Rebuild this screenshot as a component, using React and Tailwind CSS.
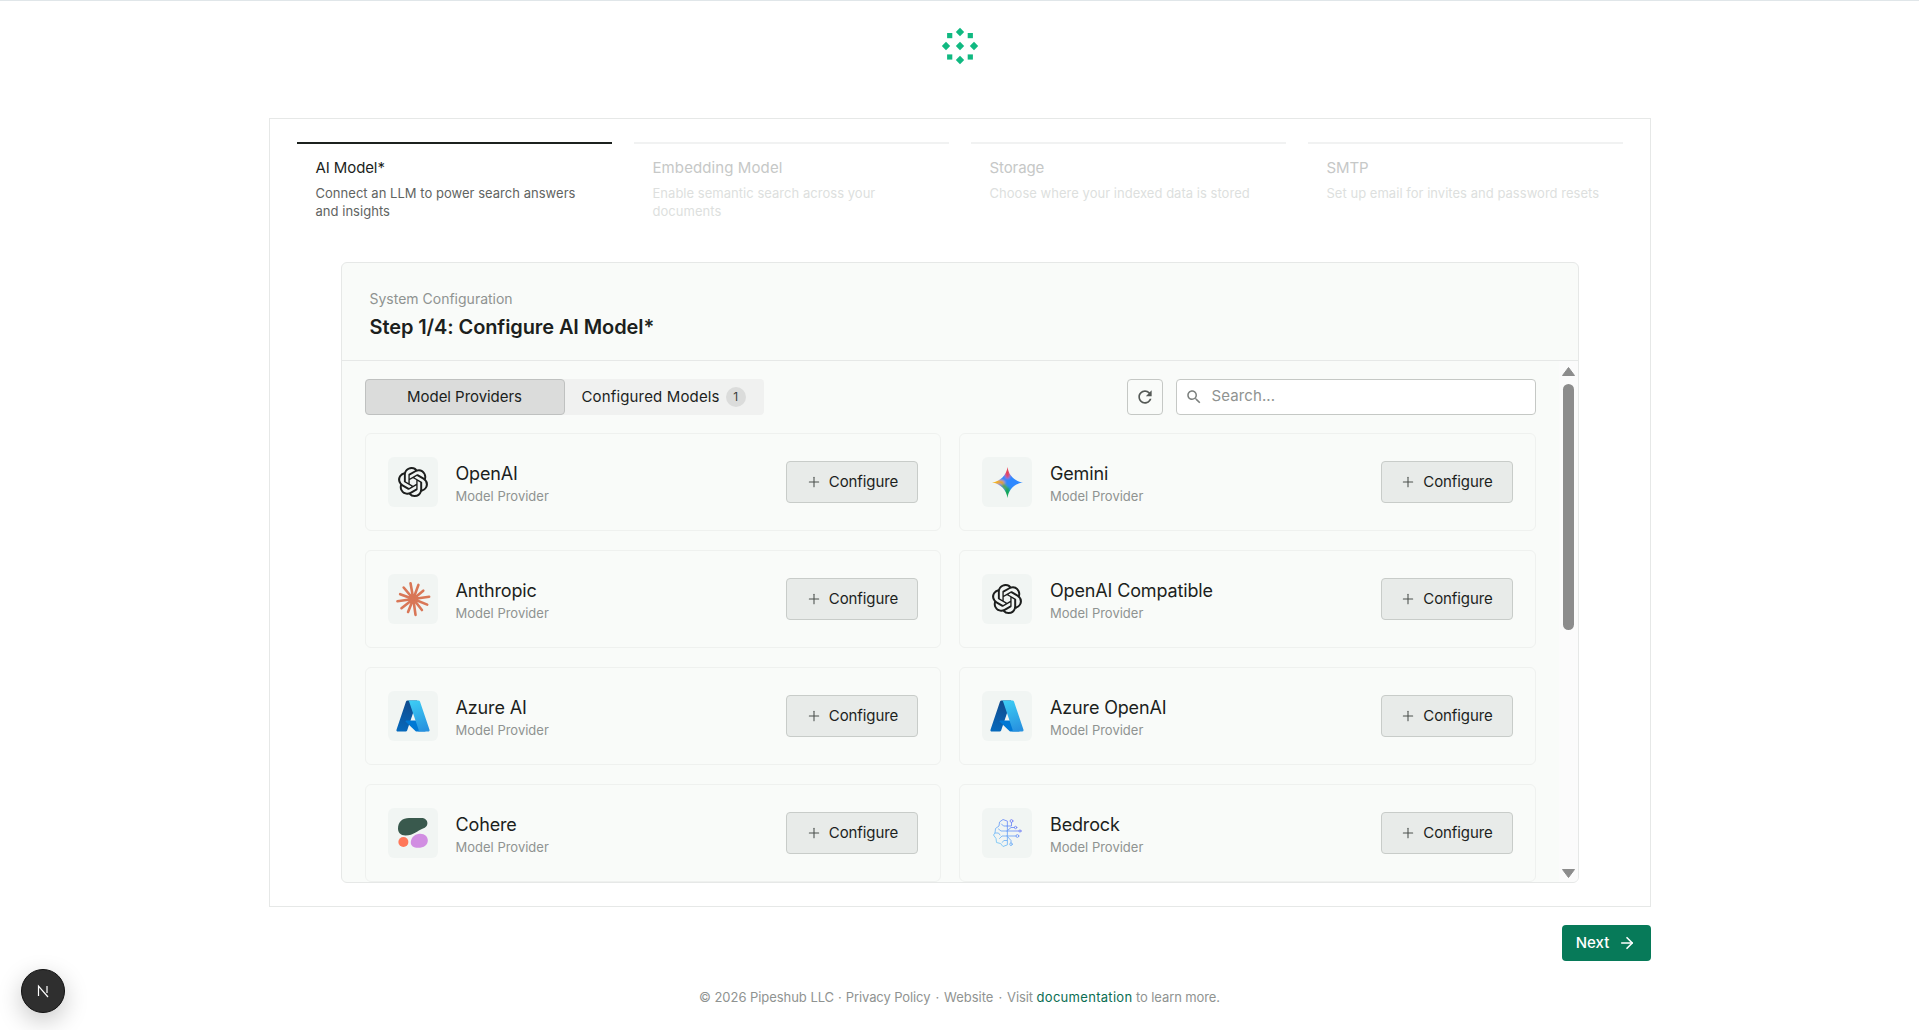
import React from "react";
import { SiOpenai } from "react-icons/si";
import { Plus, ArrowRight } from "lucide-react";

const steps = [
  { title: "AI Model*", desc: "Connect an LLM to power search answers and insights", active: true },
  { title: "Embedding Model", desc: "Enable semantic search across your documents" },
  { title: "Storage", desc: "Choose where your indexed data is stored" },
  { title: "SMTP", desc: "Set up email for invites and password resets" },
];

function Logo() {
  const d = (x, y, k) => <polygon key={k} points={`${x},${y - 4.2} ${x + 4.2},${y} ${x},${y + 4.2} ${x - 4.2},${y}`} fill="#10b981" />;
  const s = (x, y, k) => <rect key={k} x={x - 2.6} y={y - 2.6} width="5.2" height="5.2" fill="#10b981" />;
  return (
    <svg width="40" height="40" viewBox="0 0 40 40">
      {d(20, 20, "c")}{d(6, 20, "l")}{d(34, 20, "r")}{d(20, 6, "t")}{d(20, 34, "b")}
      {s(9.7, 9.6, "a")}{s(30.3, 9.6, "e")}{s(9.7, 31, "f")}{s(30.3, 31, "g")}
    </svg>
  );
}

function Gemini() {
  const star = "M12 0C12.8 6.4 17.6 11.2 24 12C17.6 12.8 12.8 17.6 12 24C11.2 17.6 6.4 12.8 0 12C6.4 11.2 11.2 6.4 12 0Z";
  return (
    <svg width="31" height="31" viewBox="0 0 24 24">
      <defs>
        <clipPath id="gemclip"><path d={star} /></clipPath>
        <filter id="gemblur" x="-30%" y="-30%" width="160%" height="160%"><feGaussianBlur stdDeviation="0.9" /></filter>
      </defs>
      <g clipPath="url(#gemclip)">
        <g filter="url(#gemblur)">
          <rect x="-2" y="-2" width="28" height="28" fill="#2f88ff" />
          <polygon points="11.5,9.5 7,-2 15,-2 13.5,8" fill="#e8455a" />
          <polygon points="10.5,12 -2,7 -2,15" fill="#f4b41e" />
          <polygon points="8,10 10,12 8,14 3,12" fill="#e9a21c" />
          <polygon points="11.5,14.5 6,26 16,26 13.5,16" fill="#12a75c" />
          <polygon points="9,13 11.5,14 11,18 7,15" fill="#5aa83a" />
          <circle cx="14.5" cy="12" r="4" fill="#2f88ff" />
        </g>
      </g>
    </svg>
  );
}

function Anthropic() {
  const rays = [
    [-100, 16], [-70, 15], [-40, 13], [-8, 16], [22, 15], [52, 14], [82, 16],
    [112, 14], [142, 15], [172, 16], [-160, 14], [-130, 15],
  ];
  return (
    <svg width="50" height="50" viewBox="0 0 50 50">
      <circle cx="25.3" cy="25" r="5" fill="#d97757" />
      {rays.map(([a, l], i) => {
        const r = (a * Math.PI) / 180;
        return <line key={i} x1="25.3" y1="25" x2={25.3 + Math.cos(r) * l} y2={25 + Math.sin(r) * l} stroke="#d97757" strokeWidth="2.6" strokeLinecap="round" />;
      })}
    </svg>
  );
}

function Azure() {
  return (
    <svg width="36" height="36" viewBox="0 0 96 96">
      <defs>
        <linearGradient id="az1b" x1="43" y1="8" x2="16" y2="88" gradientUnits="userSpaceOnUse">
          <stop offset="0" stopColor="#114a8b" /><stop offset="1" stopColor="#0669bc" />
        </linearGradient>
        <linearGradient id="az2" x1="48" y1="8" x2="76" y2="86" gradientUnits="userSpaceOnUse">
          <stop offset="0" stopColor="#3ccbf4" /><stop offset="1" stopColor="#2892df" />
        </linearGradient>
      </defs>
      <path d="M33.338 6.544h26.038l-27.03 80.087a4.152 4.152 0 0 1-3.933 2.824H8.149a4.145 4.145 0 0 1-3.928-5.47L29.404 9.368a4.152 4.152 0 0 1 3.934-2.825z" fill="url(#az1b)" />
      <path d="M71.175 60.261h-41.29a1.911 1.911 0 0 0-1.305 3.309l26.532 24.764a4.171 4.171 0 0 0 2.846 1.121h23.38z" fill="#0078d4" />
      <path d="M66.595 9.364a4.145 4.145 0 0 0-3.928-2.82H33.648a4.146 4.146 0 0 1 3.928 2.82l25.184 74.62a4.146 4.146 0 0 1-3.928 5.472h29.02a4.146 4.146 0 0 0 3.927-5.472z" fill="url(#az2)" />
    </svg>
  );
}

function Cohere() {
  return (
    <svg width="50" height="50" viewBox="0 0 50 50">
      <path d="M17.5 27.5C12.5 27.5 10 24.5 10 20.5C10 14 14.5 10 21 10L33 10C37 10 39.4 12 39.4 15.2C39.4 18 37.6 19.6 35 20.6C29 23 26 27.5 17.5 27.5Z" fill="#39594d" />
      <circle cx="15.4" cy="34" r="5" fill="#ff7759" />
      <path d="M31 25.8C36.5 25.2 39.8 28.6 39.8 32.4C39.8 36.6 36 39.8 30 39.8C25.5 39.8 22.8 37.8 22.8 34.5C22.8 30.5 26 26.4 31 25.8Z" fill="#d18ee2" />
    </svg>
  );
}

function Bedrock() {
  return (
    <svg width="30" height="30" viewBox="0 0 30 30" fill="none" strokeWidth="0.9" strokeLinecap="round" strokeLinejoin="round">
      <defs>
        <linearGradient id="bed" x1="2" y1="28" x2="28" y2="2" gradientUnits="userSpaceOnUse">
          <stop offset="0" stopColor="#7dd3f5" /><stop offset="0.6" stopColor="#6f9df7" /><stop offset="1" stopColor="#7b6df6" />
        </linearGradient>
      </defs>
      <g stroke="url(#bed)">
        <path d="M15 3 11 1.5 7.5 4 7 8 3.5 10.5 3 15 1.5 17 4 20.5 4.5 24.5 8.5 25.5 11 28.5 15 27Z" />
        <path d="M15 8H11.5L9.5 6M15 13H9L6.5 11M15 18H10L7.5 20.5M15 22.5H12L10 24.5M3 15H6.5L8 17" />
        <path d="M15 8H19.5V4.5M15 13H27M15 13L19 9.5H22.5M15 18H24M15 18L19 22.5V25" />
        <circle cx="19.5" cy="3" r="1.4" /><circle cx="23.6" cy="9.5" r="1.2" /><circle cx="28" cy="13" r="1.1" />
        <circle cx="25.4" cy="18" r="1.4" /><circle cx="19" cy="26.2" r="1.3" />
      </g>
    </svg>
  );
}

const Openai = () => <SiOpenai size={30} color="#1d1f1e" />;

const providers = [
  ["OpenAI", <Openai />], ["Gemini", <Gemini />],
  ["Anthropic", <Anthropic />], ["OpenAI Compatible", <Openai />],
  ["Azure AI", <Azure />], ["Azure OpenAI", <Azure />],
  ["Cohere", <Cohere />], ["Bedrock", <Bedrock />],
];

function Card({ name, icon }) {
  return (
    <div className="h-[98px] shrink-0 flex items-center pl-[22px] pr-[22px] border border-[#eff1ef] rounded-[6px] bg-[#f9fbf9]">
      <div className="w-[50px] h-[50px] rounded-[6px] bg-[#f1f5f3] flex items-center justify-center shrink-0">{icon}</div>
      <div className="ml-[18px] mt-[3px] flex-1 min-w-0">
        <div className="text-[18px] leading-[22px] text-[#1c1f1d] tracking-[-0.15px]">{name}</div>
        <div className="text-[13px] leading-[18px] mt-[2px] text-[#8f9391]">Model Provider</div>
      </div>
      <button className="w-[132px] h-[42px] flex items-center justify-center gap-[7px] bg-[#e8ebe9] border border-[#c8ccc9] rounded-[4px] text-[15px] tracking-[-0.1px] text-[#1c1f1d]">
        <Plus size={16} strokeWidth={1.6} color="#4b504d" />
        <span>Configure</span>
      </button>
    </div>
  );
}

export default function App() {
  return (
    <div className="min-h-[1030px] bg-white flex flex-col items-center border-t border-[#e0e6e9] font-['Inter','Noto_Sans',sans-serif]">
      <div className="h-[117px] w-full flex justify-center pt-[25px]"><Logo /></div>

      <div className="w-[1382px] h-[789px] border border-[#e6e8e7] bg-white px-[27px] pt-[23px] shrink-0">
        <div className="grid grid-cols-4 gap-x-[22px]">
          {steps.map((s) => (
            <div key={s.title}>
              <div className={s.active ? "h-[2px] bg-[#1c211e]" : "h-[2px] bg-[#f1f2f2]"} />
              <div className="pl-[19px] pr-[18px] pt-[14px] h-[90px]">
                <div className={`text-[15px] leading-[20px] ${s.title === "Embedding Model" ? "tracking-[0.1px]" : "tracking-[-0.1px]"} ${s.active ? "text-[#1c1f1d]" : "text-[#c6c8c7]"}`}>{s.title}</div>
                <div className={`mt-[6px] text-[13px] leading-[18px] tracking-[0.03px] ${s.active ? "text-[#5f6462]" : "text-[#dddfde]"}`}>{s.desc}</div>
              </div>
            </div>
          ))}
        </div>

        <div className="mx-[44px] mt-[28px] h-[621px] border border-[#e6e8e7] rounded-[6px] bg-[#f9fbf9] flex flex-col overflow-hidden">
          <div className="h-[98px] shrink-0 border-b border-[#e6e8e7] pl-[28px] pt-[26px]">
            <div className="text-[14px] leading-[20px] text-[#8f9391]">System Configuration</div>
            <div className="mt-[4px] text-[20px] leading-[28px] font-semibold text-[#1c1f1d] tracking-[-0.1px]">Step 1/4: Configure AI Model*</div>
          </div>

          <div className="flex-1 min-h-0 flex">
            <div className="flex-1 min-w-0 pl-[23px] pr-[23px] pt-[18px] overflow-hidden">
              <div className="flex items-center h-[36px]">
                <div className="flex h-[36px] bg-[#f0f1f0] rounded-[4px]">
                  <div className="w-[200px] flex items-center justify-center bg-[#dbdcdb] border border-[#bfc1c0] rounded-[4px] text-[15px] text-[#1c1f1d] tracking-[-0.05px]">Model Providers</div>
                  <div className="w-[199px] flex items-center pl-[17px] text-[15px] text-[#1c1f1d] tracking-[0.15px]">
                    Configured Models
                    <span className="ml-[6px] w-[20px] h-[20px] rounded-full bg-[#dbdcdb] flex items-center justify-center text-[12px] text-[#3a3d3b]">1</span>
                  </div>
                </div>
                <button className="ml-auto w-[36px] h-[36px] flex items-center justify-center border border-[#c5c8c5] rounded-[4px] bg-[#f9fbf9]">
                  <svg width="20" height="20" viewBox="0 0 24 24" fill="#555a57"><path d="M17.65 6.35C16.2 4.9 14.21 4 12 4c-4.42 0-7.99 3.58-7.99 8s3.57 8 7.99 8c3.73 0 6.84-2.55 7.73-6h-2.08c-.82 2.33-3.04 4-5.65 4-3.31 0-6-2.69-6-6s2.69-6 6-6c1.66 0 3.14.69 4.22 1.78L13 11h7V4l-2.35 2.35z" /></svg>
                </button>
                <div className="ml-[13px] w-[360px] h-[36px] flex items-center bg-white border border-[#c5c8c5] rounded-[4px] pl-[8px]">
                  <svg width="18" height="18" viewBox="0 0 24 24" fill="#7c807e"><path d="M15.5 14h-.79l-.28-.27C15.41 12.59 16 11.11 16 9.5 16 5.91 13.09 3 9.5 3S3 5.91 3 9.5 5.91 16 9.5 16c1.61 0 3.09-.59 4.23-1.57l.27.28v.79l5 4.99L20.49 19l-4.99-5zm-6 0C7.01 14 5 11.99 5 9.5S7.01 5 9.5 5 14 7.01 14 9.5 11.99 14 9.5 14z" /></svg>
                  <span className="ml-[9px] text-[15px] tracking-[0.1px] text-[#8f9391] pb-[1px]">Search...</span>
                </div>
              </div>

              <div className="mt-[18px] grid grid-cols-2 gap-x-[18px] gap-y-[19px]">
                {providers.map(([n, i]) => <Card key={n} name={n} icon={i} />)}
              </div>
            </div>

            <div className="w-[19px] shrink-0 bg-[#fbfbfb] flex flex-col items-center pt-[6px] pb-[4px]">
              <svg width="13" height="9" viewBox="0 0 13 9" fill="#8c8c8c"><path d="M6.5 0.5 12.5 8.5H0.5Z" stroke="#8c8c8c" strokeLinejoin="round" /></svg>
              <div className="mt-[8px] w-[11px] h-[246px] rounded-full bg-[#8c8c8c]" />
              <svg className="mt-auto" width="13" height="9" viewBox="0 0 13 9" fill="#8c8c8c"><path d="M0.5 0.5H12.5L6.5 8.5Z" stroke="#8c8c8c" strokeLinejoin="round" /></svg>
            </div>
          </div>
        </div>
      </div>

      <div className="w-[1382px] mt-[18px] flex justify-end">
        <button className="w-[89px] h-[36px] flex items-center justify-center gap-[9px] bg-[#077a59] rounded-[4px] text-[15px] font-medium text-white">
          Next
          <ArrowRight size={18} strokeWidth={2.2} />
        </button>
      </div>

      <div className="mt-[26px] text-[13px] leading-[20px] text-[#8f9391] tracking-[-0.1px]">
        <span className="tracking-[-0.05px]">© 2026 Pipeshub LLC</span>
        <span className="mx-[4px]">·</span>
        <span>Privacy Policy</span>
        <span className="mx-[5px]">·</span>
        <span className="tracking-[0px]">Website</span>
        <span className="mx-[5px]">·</span>
        <span>Visit </span>
        <span className="text-[#0a6e52] tracking-[0.3px]">documentation</span>
        <span> to learn more.</span>
      </div>

      <div className="fixed left-[21px] bottom-[17px] w-[44px] h-[44px] rounded-full bg-[#2f2f2f] border border-[#111] shadow-[0_8px_24px_rgba(0,0,0,0.22)] flex items-center justify-center">
        <svg width="16" height="16" viewBox="0 0 16 16" fill="none" stroke="#fff" strokeWidth="1.2">
          <path d="M3.5 13V3L13 14" />
          <path d="M12 3V10" />
        </svg>
      </div>
    </div>
  );
}
